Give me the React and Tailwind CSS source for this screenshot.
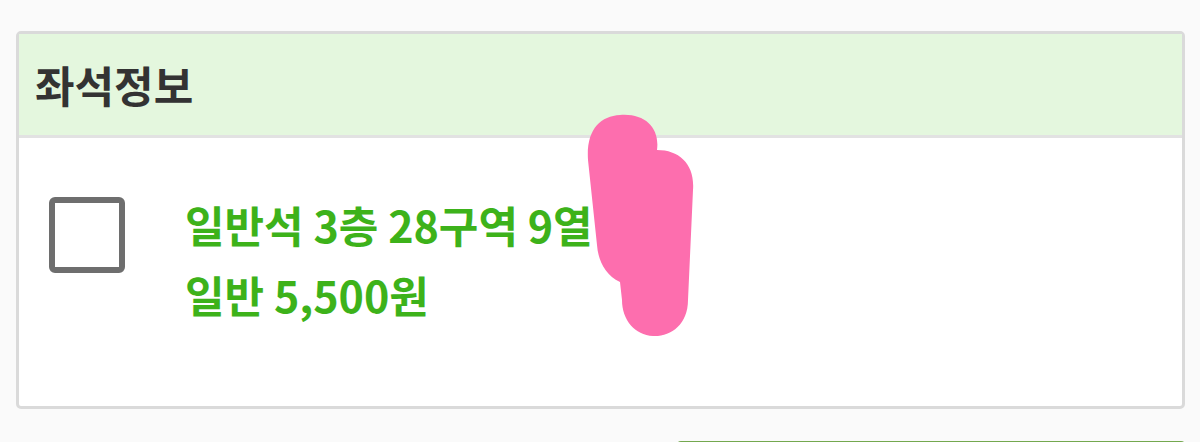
export default function App() {
  return (
    <div
      className="h-[442px] overflow-hidden bg-[#fafafa] pt-[31px] pl-4 pr-[15px]"
      style={{ fontFamily: '"Noto Sans CJK KR", "Noto Sans", sans-serif' }}
    >
      <div className="relative rounded-[5px] border-[3px] border-[#dadada] bg-white">
        {/* Section header */}
        <div className="flex h-[104px] items-center border-b-[3px] border-[#e2e2e2] bg-[#e4f7de] pl-[16px]">
          <h2 className="text-[43px] font-bold text-[#333333]">좌석정보</h2>
        </div>

        {/* Seat row */}
        <div className="flex h-[268px] items-start gap-[60px] pl-[30px] pt-[51px]">
          <div className="mt-[8px] h-[76px] w-[76px] shrink-0 rounded-[6px] border-[6px] border-[#6e6e6e] bg-white" />
          <div className="text-[43px] font-bold leading-[70px] text-[#3db21a]">
            <p>일반석 3층 28구역 9열</p>
            <p>일반 5,500원</p>
          </div>
        </div>

        {/* marker scribble */}
        <svg
          className="pointer-events-none absolute left-[561px] top-[76px]"
          width="120"
          height="232"
          viewBox="0 0 120 232"
        >
          <path
            d="M40,5 C65,3 80,18 77,40 C100,40 115,55 113,80 L108,190 C108,215 90,227 73,226 C55,225 42,210 42,190 L40,172 C25,165 18,150 17,135 L8,50 C6,20 20,6 40,5 Z"
            fill="#fd6eae"
          />
        </svg>
      </div>

      <div className="mt-8 flex justify-end">
        <button className="h-12 w-[508px] rounded-t-[4px] bg-[#74a84f]" />
      </div>
    </div>
  );
}
